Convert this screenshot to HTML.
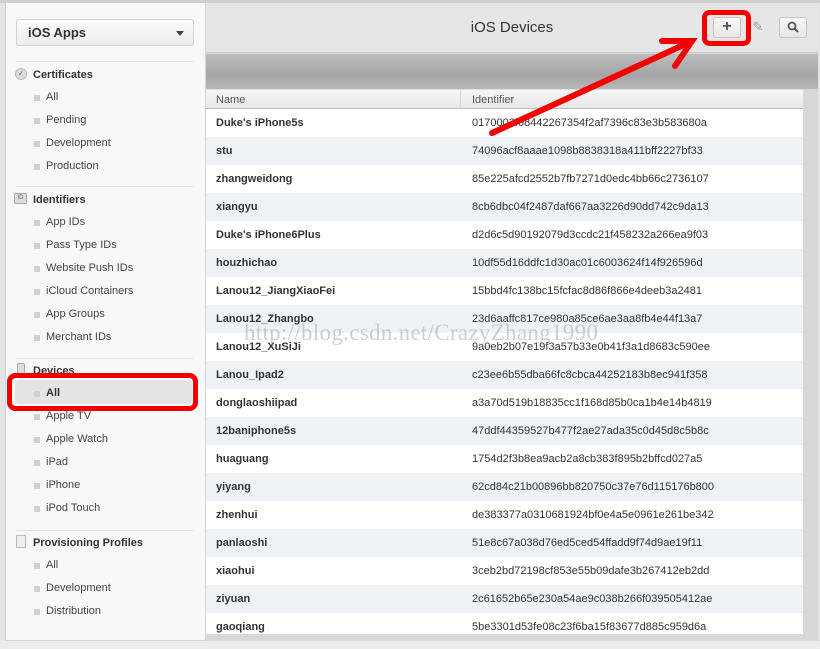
<!DOCTYPE html>
<html><head><meta charset="utf-8"><style>
*{margin:0;padding:0;box-sizing:border-box}
body{width:820px;height:649px;overflow:hidden;background:#e4e4e4;font-family:"Liberation Sans",sans-serif;position:relative}
.a{position:absolute}
#side{left:5px;top:3px;width:201px;height:638px;background:#f8f8f8;border:1px solid #d4d4d4;border-top:none}
.sel{left:16px;top:19px;width:178px;height:27px;border:1px solid #cfcfcf;border-radius:3px;background:linear-gradient(#fbfbfb,#ececec);font-size:13px;font-weight:bold;color:#333;padding:5px 11px}
.sel:after{content:"";position:absolute;right:9px;top:11px;border:4px solid transparent;border-top:5px solid #444}
.h{font-size:11px;font-weight:bold;color:#333;left:33px}
.it{font-size:11px;color:#444;left:46px}
.it:before{content:"";position:absolute;left:-12px;top:4px;width:6px;height:6px;background:#d0d0d0}
.dv{left:16px;width:177px;height:1px;background:#e2e2e2}
#main{left:206px;top:3px;width:612px;height:638px;background:#d8d8d8}
#hdr{left:206px;top:3px;width:612px;height:50px;background:#e6e6e6;border-bottom:1px solid #c8c8c8}
#band{left:206px;top:54px;width:612px;height:35px;background:linear-gradient(#bdbdbd,#a5a5a5 60%,#b8b8b8)}
#tbl{left:206px;top:89px;width:597px;height:545px;background:#fff;overflow:hidden}
.th{height:20px;background:linear-gradient(#f6f6f6,#e8e8e8);border-bottom:1px solid #bbb;border-top:1px solid #ddd;font-size:11px;color:#555;position:relative}
.r{height:28px;font-size:11px;color:#333;position:relative}
.r:nth-child(even){background:#eef2f6}
.r b{position:absolute;left:10px;top:8px}
.r span{position:absolute;left:266px;top:8px;font-size:11px}
.btn{top:17px;width:28px;height:21px;border:1px solid #c4c4c4;border-radius:3px;background:linear-gradient(#fafafa,#e6e6e6)}
</style></head><body>
<div class="a" style="left:0;top:0;width:820px;height:3px;background:#cfcfcf"></div>
<div id="side" class="a"></div>
<div class="a sel">iOS Apps</div>
<div class="a dv" style="top:61px"></div>
<div class="a" style="left:15px;top:68px;width:12px;height:12px;border-radius:6px;background:#ddd;border:1px solid #bbb;font-size:8px;text-align:center;line-height:10px;color:#777">✓</div>
<div class="a h" style="top:69px">Certificates</div>
<div class="a it" style="top:91px">All</div>
<div class="a it" style="top:114px">Pending</div>
<div class="a it" style="top:137px">Development</div>
<div class="a it" style="top:160px">Production</div>
<div class="a dv" style="top:186px"></div>
<div class="a" style="left:14px;top:193px;width:13px;height:11px;border-radius:2px;background:#ddd;border:1px solid #aaa;font-size:6px;text-align:center;line-height:9px;color:#666">ID</div>
<div class="a h" style="top:194px">Identifiers</div>
<div class="a it" style="top:216px">App IDs</div>
<div class="a it" style="top:239px">Pass Type IDs</div>
<div class="a it" style="top:262px">Website Push IDs</div>
<div class="a it" style="top:285px">iCloud Containers</div>
<div class="a it" style="top:308px">App Groups</div>
<div class="a it" style="top:331px">Merchant IDs</div>
<div class="a dv" style="top:358px"></div>
<div class="a" style="left:17px;top:363px;width:8px;height:12px;border-radius:2px;background:#ddd;border:1px solid #aaa"></div>
<div class="a h" style="top:365px">Devices</div>
<div class="a" style="left:15px;top:380px;width:177px;height:24px;border-radius:4px;background:#e4e4e4"></div>
<div class="a it" style="top:387px;font-weight:bold;color:#333">All</div>
<div class="a it" style="top:410px">Apple TV</div>
<div class="a it" style="top:433px">Apple Watch</div>
<div class="a it" style="top:456px">iPad</div>
<div class="a it" style="top:479px">iPhone</div>
<div class="a it" style="top:502px">iPod Touch</div>
<div class="a dv" style="top:530px"></div>
<div class="a" style="left:16px;top:535px;width:10px;height:13px;background:#eee;border:1px solid #bbb"></div>
<div class="a h" style="top:537px">Provisioning Profiles</div>
<div class="a it" style="top:559px">All</div>
<div class="a it" style="top:582px">Development</div>
<div class="a it" style="top:605px">Distribution</div>

<div id="main" class="a"></div>
<div id="hdr" class="a"></div>
<div class="a" style="left:206px;top:19px;width:612px;text-align:center;font-size:15px;color:#333">iOS Devices</div>
<div class="a btn" style="left:713px;font-size:16px;font-weight:bold;color:#555;text-align:center;line-height:18px">+</div>
<div class="a btn" style="left:744px;border:none;background:none;color:#999;font-size:13px;text-align:center;line-height:20px">✎</div>
<div class="a btn" style="left:779px"><svg width="26" height="19"><circle cx="12" cy="8" r="3.5" fill="none" stroke="#555" stroke-width="1.8"/><line x1="14.5" y1="10.5" x2="18" y2="14" stroke="#555" stroke-width="2"/></svg></div>
<div id="band" class="a"></div>
<div id="tbl" class="a">
<div class="th"><span class="a" style="left:10px;top:4px">Name</span><span class="a" style="left:254px;top:0;width:1px;height:19px;background:#d4d4d4"></span><span class="a" style="left:266px;top:4px">Identifier</span></div>
<div>
<div class="r"><b>Duke's iPhone5s</b><span>0170003f68442267354f2af7396c83e3b583680a</span></div>
<div class="r"><b>stu</b><span>74096acf8aaae1098b8838318a411bff2227bf33</span></div>
<div class="r"><b>zhangweidong</b><span>85e225afcd2552b7fb7271d0edc4bb66c2736107</span></div>
<div class="r"><b>xiangyu</b><span>8cb6dbc04f2487daf667aa3226d90dd742c9da13</span></div>
<div class="r"><b>Duke's iPhone6Plus</b><span>d2d6c5d90192079d3ccdc21f458232a266ea9f03</span></div>
<div class="r"><b>houzhichao</b><span>10df55d16ddfc1d30ac01c6003624f14f926596d</span></div>
<div class="r"><b>Lanou12_JiangXiaoFei</b><span>15bbd4fc138bc15fcfac8d86f866e4deeb3a2481</span></div>
<div class="r"><b>Lanou12_Zhangbo</b><span>23d6aaffc817ce980a85ce6ae3aa8fb4e44f13a7</span></div>
<div class="r"><b>Lanou12_XuSiJi</b><span>9a0eb2b07e19f3a57b33e0b41f3a1d8683c590ee</span></div>
<div class="r"><b>Lanou_Ipad2</b><span>c23ee6b55dba66fc8cbca44252183b8ec941f358</span></div>
<div class="r"><b>donglaoshiipad</b><span>a3a70d519b18835cc1f168d85b0ca1b4e14b4819</span></div>
<div class="r"><b>12baniphone5s</b><span>47ddf44359527b477f2ae27ada35c0d45d8c5b8c</span></div>
<div class="r"><b>huaguang</b><span>1754d2f3b8ea9acb2a8cb383f895b2bffcd027a5</span></div>
<div class="r"><b>yiyang</b><span>62cd84c21b00896bb820750c37e76d115176b800</span></div>
<div class="r"><b>zhenhui</b><span>de383377a0310681924bf0e4a5e0961e261be342</span></div>
<div class="r"><b>panlaoshi</b><span>51e8c67a038d76ed5ced54ffadd9f74d9ae19f11</span></div>
<div class="r"><b>xiaohui</b><span>3ceb2bd72198cf853e55b09dafe3b267412eb2dd</span></div>
<div class="r"><b>ziyuan</b><span>2c61652b65e230a54ae9c038b266f039505412ae</span></div>
<div class="r"><b>gaoqiang</b><span>5be3301d53fe08c23f6ba15f83677d885c959d6a</span></div>
</div></div>
<div class="a" style="left:244px;top:320px;font-family:'Liberation Serif',serif;font-size:23px;color:rgba(150,150,150,0.45);letter-spacing:0.3px">http://blog.csdn.net/CrazyZhang1990</div>
<div class="a" style="left:0;top:641px;width:820px;height:8px;background:#ececec"></div>

<svg class="a" style="left:0;top:0" width="820" height="649">
<rect x="704.5" y="12.5" width="44" height="31" rx="5" fill="none" stroke="#f20000" stroke-width="5"/>
<rect x="9.5" y="375.5" width="186" height="33" rx="6" fill="none" stroke="#f20000" stroke-width="5"/>
<g stroke="#f20000" stroke-width="6" stroke-linecap="round" fill="none">
<line x1="492" y1="133" x2="690" y2="42"/>
<polyline points="662,41 692,41 675,66"/>
</g>
</svg>
</body></html>
